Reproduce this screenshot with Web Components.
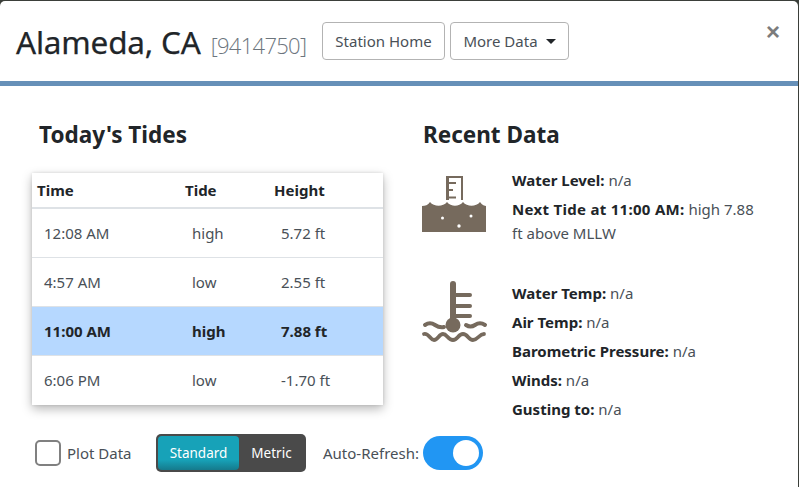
<!DOCTYPE html>
<html><head><meta charset="utf-8"><style>
html,body{margin:0;padding:0;background:#fff;overflow:hidden}
body{width:799px;height:487px;font-family:"Noto Sans","Open Sans",sans-serif;color:#212529}
</style></head><body>
<tide-modal>
  <modal-header slot="header"></modal-header>
  <section-title slot="lefttitle">Today's Tides</section-title>
  <tide-table slot="table">
    <tide-row head t="Time" k="Tide" h="Height"></tide-row>
    <tide-row t="12:08 AM" k="high" h="5.72 ft"></tide-row>
    <tide-row t="4:57 AM" k="low" h="2.55 ft"></tide-row>
    <tide-row active t="11:00 AM" k="high" h="7.88 ft"></tide-row>
    <tide-row t="6:06 PM" k="low" h="-1.70 ft"></tide-row>
  </tide-table>
  <tide-controls slot="controls"></tide-controls>
  <section-title slot="righttitle">Recent Data</section-title>
  <data-block slot="data" icon="level" style="--h:113px">
    <data-line><b>Water Level:</b> n/a</data-line>
    <data-line><b style="letter-spacing:.3px">Next Tide at 11:00 AM:</b> high 7.88<br>ft above MLLW</data-line>
  </data-block>
  <data-block slot="data" icon="temp">
    <data-line><b>Water Temp:</b> n/a</data-line>
    <data-line><b>Air Temp:</b> n/a</data-line>
    <data-line><b>Barometric Pressure:</b> n/a</data-line>
    <data-line><b>Winds:</b> n/a</data-line>
    <data-line><b>Gusting to:</b> n/a</data-line>
  </data-block>
</tide-modal>
<script>
function def(name,html){
  customElements.define(name,class extends HTMLElement{
    constructor(){super();this.attachShadow({mode:'open'}).innerHTML=typeof html==='function'?html(this):html;}
  });
}
def('tide-modal',`<style>
:host{display:block;width:799px;height:487px;background:#3b3f3a;overflow:hidden;font-size:14px}
.m{margin:1px 1px 0 0;height:486px;background:#fff;border-radius:5px 5px 0 0;display:flex;flex-direction:column}
.b{display:grid;grid-template-columns:352px 1fr;column-gap:39px;padding:0 0 0 32px;flex:1;min-height:0}
.l{display:flex;flex-direction:column;min-width:0}
.lt{padding:34px 0 0 7px;height:53px}
.rt{padding:34px 0 0 0;height:53px}
.r{display:flex;flex-direction:column}
.dt{margin-top:-5px;display:flex;flex-direction:column}
</style><div class="m"><slot name="header"></slot><div class="b">
<div class="l"><div class="lt"><slot name="lefttitle"></slot></div><slot name="table"></slot><slot name="controls"></slot></div>
<div class="r"><div class="rt"><slot name="righttitle"></slot></div><div class="dt"><slot name="data"></slot></div></div>
</div></div>`);
def('modal-header',`<style>
:host{display:flex;align-items:center;height:80px;border-bottom:5px solid #6690b8;box-sizing:content-box;padding:0 18px 0 16px;position:relative}
h1{margin:0;width:291px;flex:none;font:400 31.5px/1 "Noto Sans",sans-serif;color:#212529;white-space:nowrap;letter-spacing:-.2px;padding-top:2px;-webkit-text-stroke:.25px #212529}
small{font:300 22px/1 "Open Sans",sans-serif;color:#6c757d;margin-left:2px;letter-spacing:-.7px;-webkit-text-stroke:0}
.bs{display:flex;gap:5px;margin-left:15px}
button{box-sizing:border-box;height:38px;background:#fff;border:1px solid #b3b3b3;border-radius:4px;font:400 15px/1 "Noto Sans",sans-serif;color:#495057;padding:0;display:flex;align-items:center;justify-content:center}
.a{width:123px}.c{width:119px;gap:8px}
i{display:block;width:0;height:0;border:5px solid transparent;border-top-color:#212529;border-bottom:0}
.x{margin-left:auto;font:700 24px/1 "Liberation Sans",sans-serif;color:#7c7c7c;align-self:flex-start;margin-top:19px}
</style><h1>Alameda, CA <small>[9414750]</small></h1><div class="bs"><button class="a">Station Home</button><button class="c">More Data<i></i></button></div><span class="x">×</span>`);
def('section-title',`<style>:host{display:block;font:700 22.5px/30px "Noto Sans",sans-serif;color:#212529;white-space:nowrap}</style><slot></slot>`);
def('tide-table',`<style>:host{display:block;flex:none;width:351px;background:#fff;box-shadow:0 4px 10px rgba(0,0,0,.28),0 0 3px rgba(0,0,0,.12)}</style><slot></slot>`);
def('tide-row',t=>{
 const head=t.hasAttribute('head');
 const act=t.hasAttribute('active');
 const a=n=>t.getAttribute(n);
 return `<style>:host{display:grid;grid-template-columns:148px 89px 114px;align-items:center;box-sizing:border-box;font:${head||act?700:400} 15px/1 "Noto Sans",sans-serif;height:${head?36:49}px;
 color:${head||act?'#212529':'#495057'};background:${act?'#b6d8ff':'#fff'};
 border-bottom:${head?'2px solid #dee2e6':'1px solid #dee2e6'}}
 :host(:last-child){border-bottom:0}
 span{padding-left:${head?5:12}px;white-space:nowrap}</style><span>${a('t')}</span><span>${a('k')}</span><span>${a('h')}</span>`;
});
def('tide-controls',`<style>
:host{display:flex;flex:none;align-items:center;width:460px;height:38px;margin-top:29px;font:400 15px/1 "Noto Sans",sans-serif;color:#495057}
.cb{box-sizing:border-box;flex:none;width:26px;height:26px;border:2px solid #808080;border-radius:5px;margin-left:3px;background:#fff}
.pl{flex:none;width:89px;margin-left:6px;white-space:nowrap}
.tg{display:flex;flex:none;box-sizing:border-box;width:150px;height:38px;background:#4a4a4a;border-radius:5px;padding:2px;font-size:13.5px}
.s{width:81px;background:linear-gradient(#17a2b8 0,#17a2b8 70%,#157a8c 100%);color:#fff;border-radius:4px;display:flex;align-items:center;justify-content:center;padding-top:1px;box-sizing:border-box}
.me{flex:1;color:#fff;display:flex;align-items:center;justify-content:center;padding-top:1px}
.ar{margin-left:17px;flex:none;width:100px;white-space:nowrap}
.sw{flex:none;width:60px;height:34px;background:#2196f3;border-radius:17px;display:flex;justify-content:flex-end;align-items:center;padding-right:4px;box-sizing:border-box}
.sw i{display:block;width:26px;height:26px;background:#fff;border-radius:50%}
</style><div class="cb"></div><span class="pl">Plot Data</span><div class="tg"><div class="s">Standard</div><div class="me">Metric</div></div><span class="ar">Auto-Refresh:</span><div class="sw"><i></i></div>`);
const ICONS={
level:`<svg width="66" height="58" viewBox="0 0 66 58" style="display:block"><g fill="#766a5d"><path d="M24 0h17v24h-2V2H27v22h-3z"/><path d="M27 6h7v2h-7zM27 13h4v2h-4zM27 20.500h7v2h-7z"/><path d="M0 30c3 0 6-1 8-4 4 5 13 5 17 0 4 5 12 5 16 0 4 5 13 5 17 0 2 3 5 4 6 4v26H0z"/></g><g fill="#fff"><circle cx="20.500" cy="42" r="1.500"/><circle cx="49" cy="40" r="1.500"/><circle cx="37" cy="50" r="1.700"/></g></svg>`,
temp:`<svg width="66" height="64" viewBox="0 0 66 64" style="display:block"><g fill="none" stroke="#766a5d" stroke-linecap="round"><path d="M31 3v40" stroke-width="6"/><path d="M33 14h15M33 25h15M33 35h15" stroke-width="4"/><path d="M3 44c3-2 7-2 10 0s5 3 9 2M44 44c3 2 6 2 9 0s7-2 10 0" stroke-width="4"/><path d="M2 53c5-1 6 6 10 6s5-6 9-6 5 6 10 6 5-6 10-6 5 6 10 6 6-6 11-6" stroke-width="3.800"/></g><circle cx="31" cy="44" r="7.500" fill="#766a5d"/></svg>`};
def('data-block',t=>`<style>:host{display:grid;grid-template-columns:90px 260px;min-height:var(--h,auto)}
.ic{margin-left:-1px;padding-top:${t.getAttribute('icon')==='level'?8:0}px}.tx{margin-left:-1px}</style><div class="ic">${ICONS[t.getAttribute('icon')]}</div><div class="tx"><slot></slot></div>`);
def('data-line',`<style>:host{display:block;font:400 15px/24px "Noto Sans",sans-serif;color:#495057;margin-bottom:5px}
::slotted(b){color:#212529;font-weight:700}</style><slot></slot>`);
</script></body></html>
